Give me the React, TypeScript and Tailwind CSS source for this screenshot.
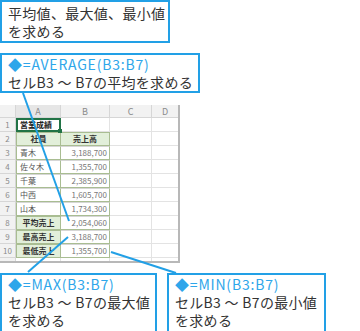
import React from 'react';

const rows: { n: number; a: string; b: string; head?: boolean }[] = [
  { n: 1, a: '営業成績', b: '' },
  { n: 2, a: '社員', b: '売上高', head: true },
  { n: 3, a: '青木', b: '3,188,700' },
  { n: 4, a: '佐々木', b: '1,355,700' },
  { n: 5, a: '千葉', b: '2,385,900' },
  { n: 6, a: '中西', b: '1,605,700' },
  { n: 7, a: '山本', b: '1,734,300' },
  { n: 8, a: '平均売上', b: '2,054,060', head: true },
  { n: 9, a: '最高売上', b: '3,188,700', head: true },
  { n: 10, a: '最低売上', b: '1,355,700', head: true },
];

const font = { fontFamily: '"Noto Sans CJK JP", "Noto Sans", sans-serif' };

function Sheet() {
  return (
    <div className="w-[180px] border-r-2 border-b-2 border-[#b8b8b8] text-[8px] leading-none">
      <div className="grid grid-cols-[16px_45px_49px_42px_26px] h-[13px] bg-[#f2f2f2] text-[#8a8a8a] text-[9px] border-b border-[#d6d6d6]">
        <div className="border-r border-[#d6d6d6]" />
        <div className="flex items-center justify-center border-r border-[#d6d6d6] bg-[#e6e6e6]">A</div>
        <div className="flex items-center justify-center border-r border-[#d6d6d6]">B</div>
        <div className="flex items-center justify-center border-r border-[#d6d6d6]">C</div>
        <div className="flex items-center justify-center">D</div>
      </div>
      {rows.map((r) => {
        const aBox =
          r.n === 1
            ? 'relative border-2 border-[#217346] font-bold text-[#222] pl-[2px] justify-start'
            : r.head
            ? 'border border-[#a9bd92] bg-[#e2efda] font-bold text-[#333] justify-center'
            : 'border border-[#a9bd92] border-t-[#d6d6d6] text-[#555] pl-[3px] justify-start';
        const bBox =
          r.n === 1
            ? ''
            : r.head && r.n === 2
            ? 'border-y border-r border-[#a9bd92] bg-[#e2efda] font-bold text-[#333] justify-center'
            : 'border-y border-r border-[#a9bd92] border-t-[#d6d6d6] text-[#777] justify-end pr-[2px]';
        return (
          <div key={r.n} className="grid grid-cols-[16px_45px_49px_42px_26px] h-[14px]">
            <div className="flex items-center justify-center bg-[#f2f2f2] text-[#8a8a8a] text-[8px] border-r border-b border-[#d6d6d6]">
              {r.n}
            </div>
            <div className={`flex items-center ${aBox}`}>
              {r.a}
              {r.n === 1 && <span className="absolute -right-[3px] -bottom-[3px] w-[4px] h-[4px] bg-[#217346]" />}
            </div>
            <div className={`flex items-center ${bBox || 'border-b border-r border-[#e3e3e3]'}`}>{r.b}</div>
            <div className="border-b border-r border-[#e3e3e3]" />
            <div className="border-b border-[#e3e3e3]" />
          </div>
        );
      })}
      <div className="grid grid-cols-[16px_45px_49px_42px_26px] h-[3px]">
        <div className="bg-[#f2f2f2] border-r border-[#d6d6d6]" />
        <div className="border-r border-[#e3e3e3]" />
        <div className="border-r border-[#e3e3e3]" />
        <div className="border-r border-[#e3e3e3]" />
        <div />
      </div>
    </div>
  );
}

function Callout({ title, lines, className }: { title?: string; lines: string[]; className: string }) {
  return (
    <div className={`border-2 border-[#22a0e6] bg-white pl-[6px] text-[14px] leading-[18px] tracking-[0.3px] text-[#333] ${className}`}>
      {title && <div className="text-[#2ea6ea] tracking-[0.8px]">◆{title}</div>}
      {lines.map((l) => (
        <div key={l}>{l}</div>
      ))}
    </div>
  );
}

export default function App() {
  return (
    <div className="relative w-[360px] h-[331px] bg-white overflow-hidden" style={font}>
      <Callout className="w-[170px] h-[43px] pt-[2px]" lines={['平均値、最大値、最小値', 'を求める']} />
      <Callout
        className="mt-[10px] w-[200px] h-[40px] pt-0"
        title="=AVERAGE(B3:B7)"
        lines={['セルB3 ～ B7の平均を求める']}
      />
      <div className="mt-[12px]">
        <Sheet />
      </div>
      <div className="mt-[10px] flex gap-[10px]">
        <Callout
          className="w-[157px] h-[60px] pt-0"
          title="=MAX(B3:B7)"
          lines={['セルB3 ～ B7の最大値', 'を求める']}
        />
        <Callout
          className="w-[159px] h-[60px] pt-0"
          title="=MIN(B3:B7)"
          lines={['セルB3 ～ B7の最小値', 'を求める']}
        />
      </div>
      <svg className="absolute inset-0 pointer-events-none" width="360" height="331">
        <g stroke="#22a0e6" strokeWidth="2" fill="none">
          <line x1="23" y1="93" x2="69" y2="221" />
          <line x1="28" y1="272" x2="68" y2="237" />
          <line x1="111" y1="252" x2="176" y2="273" />
        </g>
      </svg>
    </div>
  );
}
